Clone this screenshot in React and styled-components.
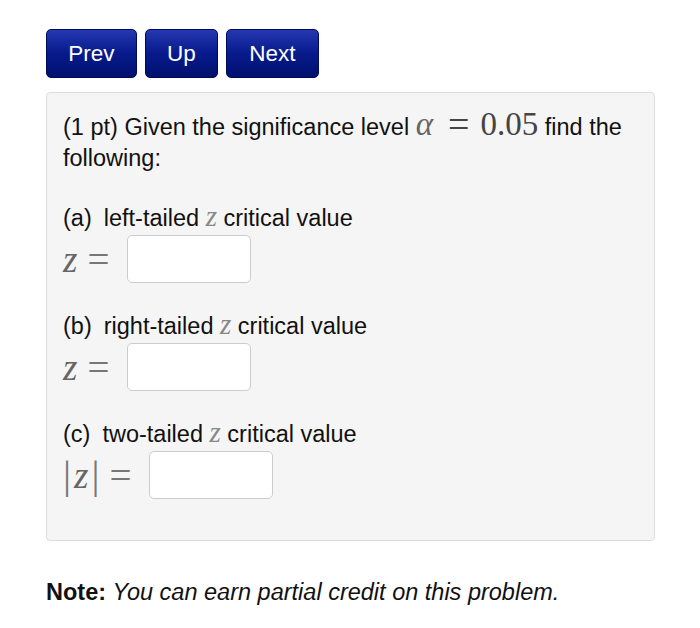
import { createGlobalStyle } from "styled-components";
import styled from "styled-components";

const Global = createGlobalStyle`
  body {
    margin: 0;
    background: #fff;
    font-family: "Liberation Sans", Arial, sans-serif;
    color: #111;
  }
`;

const Page = styled.div`
  width: 700px;
  height: 628px;
  padding: 29px 45px 0 46px;
  box-sizing: border-box;
`;

const Nav = styled.div`
  display: flex;
  gap: 8px;
  margin-bottom: 14px;
`;

const NavButton = styled.button`
  width: ${(p) => p.w}px;
  height: 49px;
  border: 1px solid #000a5c;
  border-radius: 5px;
  background: linear-gradient(#2438b0, #071a8c 50%, #00106e);
  color: #fff;
  font-family: "Liberation Sans", Arial, sans-serif;
  font-size: 22.5px;
  padding: 0;
`;

const Panel = styled.div`
  width: 609px;
  height: 449px;
  box-sizing: border-box;
  background: #f5f5f5;
  border: 1px solid #ddd;
  border-radius: 4px;
  padding: 19px 16px;
  font-size: 23.5px;
`;

const Intro = styled.p`
  margin: 0;
  line-height: 31px;
`;

const Serif = styled.span`
  font-family: "Liberation Serif", "Times New Roman", serif;
  font-size: ${(p) => p.size || 33}px;
  line-height: 0;
  font-style: ${(p) => (p.it ? "italic" : "normal")};
  color: ${(p) => p.c || "#444"};
  margin: ${(p) => p.m || "0"};
  vertical-align: ${(p) => p.va || 0}px;
`;

const Part = styled.div`
  margin-top: ${(p) => p.mt}px;
`;

const Label = styled.div`
  line-height: 26px;
`;

const Tag = styled.span`
  margin-right: 12px;
`;

const AnswerRow = styled.div`
  display: flex;
  align-items: center;
  gap: 18px;
  margin-top: 4px;
`;

const MathLabel = styled.span`
  font-family: "Liberation Serif", "Times New Roman", serif;
  font-size: 37px;
  color: #666;
  font-style: italic;
  display: inline-flex;
  align-items: center;
  gap: 10px;
  line-height: 1;
`;

const Eq = styled.span`
  font-style: normal;
  color: #777;
  font-size: 39px;
`;

const Bar = styled.span`
  font-style: normal;
  color: #777;
  font-size: 40px;
  margin: ${(p) => (p.r ? "0 0 0 3px" : "0 3px 0 0")};
`;

const Input = styled.input`
  width: 124px;
  height: 48px;
  box-sizing: border-box;
  border: 1px solid #ccc;
  border-radius: 5px;
  background: #fff;
`;

const Note = styled.p`
  margin: 38px 0 0 0;
  font-size: 23.5px;
  b { font-weight: 700; }
  i { font-style: italic; }
`;

export default function App() {
  return (
    <>
      <Global />
      <Page>
        <Nav>
          <NavButton w={91}>Prev</NavButton>
          <NavButton w={73}>Up</NavButton>
          <NavButton w={93}>Next</NavButton>
        </Nav>
        <Panel>
          <Intro>
            (1 pt) Given the significance level <Serif it c="#666">α</Serif>
            <Serif size={38} va={-2} m="0 11px 0 15px">=</Serif>
            <Serif>0.05</Serif> find the following:
          </Intro>
          <Part mt={31}>
            <Label><Tag>(a)</Tag>left-tailed <Serif it c="#888" size={29}>z</Serif> critical value</Label>
            <AnswerRow>
              <MathLabel>z<Eq>=</Eq></MathLabel>
              <Input />
            </AnswerRow>
          </Part>
          <Part mt={30}>
            <Label><Tag>(b)</Tag>right-tailed <Serif it c="#888" size={29}>z</Serif> critical value</Label>
            <AnswerRow>
              <MathLabel>z<Eq>=</Eq></MathLabel>
              <Input />
            </AnswerRow>
          </Part>
          <Part mt={30}>
            <Label><Tag>(c)</Tag>two-tailed <Serif it c="#888" size={29}>z</Serif> critical value</Label>
            <AnswerRow>
              <MathLabel>
                <span>
                  <Bar>|</Bar>z<Bar r>|</Bar>
                </span>
                <Eq>=</Eq>
              </MathLabel>
              <Input />
            </AnswerRow>
          </Part>
        </Panel>
        <Note>
          <b>Note:</b> <i>You can earn partial credit on this problem.</i>
        </Note>
      </Page>
    </>
  );
}
